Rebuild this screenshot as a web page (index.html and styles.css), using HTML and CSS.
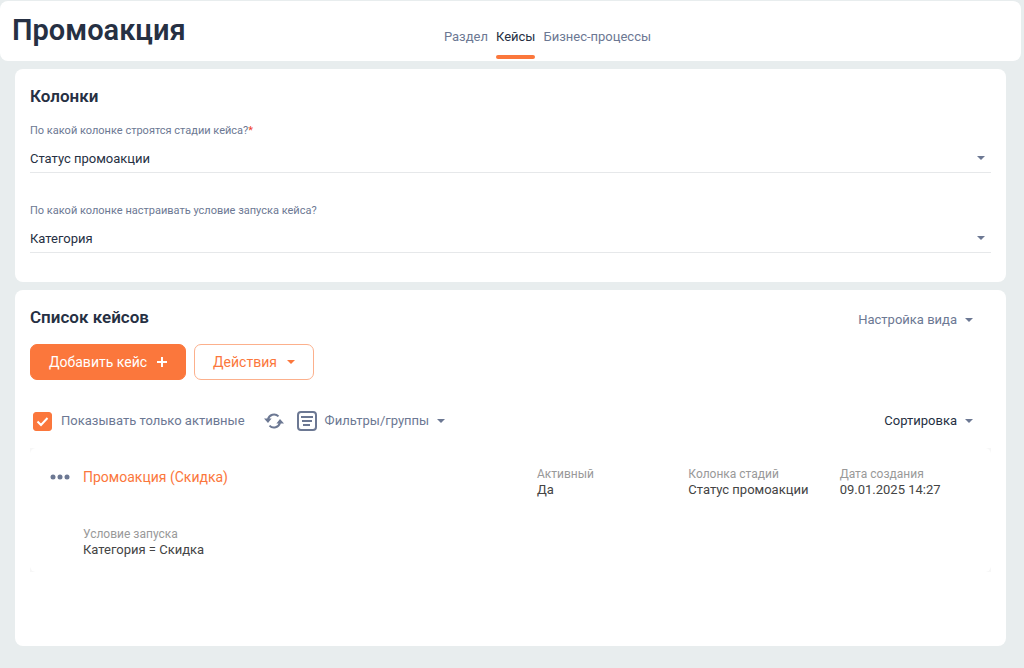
FILE: index.html
```html
<!DOCTYPE html>
<html lang="ru">
<head>
<meta charset="utf-8">
<meta name="viewport" content="width=device-width, initial-scale=1">
<title>Промоакция</title>
<link rel="stylesheet" href="styles.css">
</head>
<body>
<header class="topbar">
  <h1 class="page-title">Промоакция</h1>
  <nav class="tabs">
    <a class="tab" href="#section">Раздел</a>
    <a class="tab tab-active" href="#cases" aria-current="page">Кейсы</a>
    <a class="tab" href="#processes">Бизнес-процессы</a>
  </nav>
</header>
<main class="content">
  <section class="card columns-card">
    <h2 class="card-title">Колонки</h2>
    <div class="field">
      <label class="field-label" for="stage-column">По какой колонке строятся стадии кейса?<span class="required">*</span></label>
      <div class="select-box">
        <select class="select" id="stage-column" required><option>Статус промоакции</option></select>
        <svg class="caret" viewBox="0 0 8 4" aria-hidden="true"><path d="M0 0h8L4 4z"/></svg>
      </div>
    </div>
    <div class="field">
      <label class="field-label" for="start-column">По какой колонке настраивать условие запуска кейса?</label>
      <div class="select-box">
        <select class="select" id="start-column"><option>Категория</option></select>
        <svg class="caret" viewBox="0 0 8 4" aria-hidden="true"><path d="M0 0h8L4 4z"/></svg>
      </div>
    </div>
  </section>

  <section class="card cases-card">
    <div class="cases-head">
      <h2 class="card-title">Список кейсов</h2>
      <button class="link-button" type="button">Настройка вида
        <svg class="caret" viewBox="0 0 8 4" aria-hidden="true"><path d="M0 0h8L4 4z"/></svg>
      </button>
    </div>
    <div class="actions">
      <button class="button button-primary" type="button">Добавить кейс
        <svg class="plus" viewBox="0 0 10 10" aria-hidden="true"><path d="M5 0v10M0 5h10"/></svg>
      </button>
      <button class="button button-outline" type="button">Действия
        <svg class="caret" viewBox="0 0 8 4" aria-hidden="true"><path d="M0 0h8L4 4z"/></svg>
      </button>
    </div>
    <div class="toolbar">
      <label class="check-label"><input class="check" type="checkbox" checked><svg class="check-mark" viewBox="0 0 19 19" aria-hidden="true"><path d="M4.500 9.500l3.500 3.500 6.500-7"/></svg><span>Показывать только активные</span></label>
      <button class="icon-button" type="button" aria-label="Обновить">
        <svg class="refresh" viewBox="0 0 20 16" aria-hidden="true"><path class="arc" d="M14.500 3.400A6.200 6.200 0 0 0 4 6.500M5.500 12.600A6.200 6.200 0 0 0 16 9.500"/><path class="head" d="M0 5.500h7.600L4 10zM12.400 10.500h7.600L16 6z"/></svg>
      </button>
      <button class="link-button filter-button" type="button">
        <svg class="list-icon" viewBox="0 0 20 20" aria-hidden="true"><rect x="1" y="1" width="18" height="18" rx="3"/><path d="M4 6h12M5 10h10M6 14h7"/></svg>
        Фильтры/группы
        <svg class="caret" viewBox="0 0 8 4" aria-hidden="true"><path d="M0 0h8L4 4z"/></svg>
      </button>
      <button class="link-button sort-button" type="button">Сортировка
        <svg class="caret" viewBox="0 0 8 4" aria-hidden="true"><path d="M0 0h8L4 4z"/></svg>
      </button>
    </div>
    <div class="case-list">
      <article class="case">
        <button class="icon-button" type="button" aria-label="Меню кейса">
          <svg class="dots" viewBox="0 0 20 6" aria-hidden="true"><circle cx="3" cy="3" r="2.500"/><circle cx="10" cy="3" r="2.500"/><circle cx="17" cy="3" r="2.500"/></svg>
        </button>
        <a class="case-name" href="#case">Промоакция (Скидка)</a>
        <dl class="fact"><dt>Активный</dt><dd>Да</dd></dl>
        <dl class="fact"><dt>Колонка стадий</dt><dd>Статус промоакции</dd></dl>
        <dl class="fact"><dt>Дата создания</dt><dd>09.01.2025 14:27</dd></dl>
        <dl class="fact condition"><dt>Условие запуска</dt><dd>Категория = Скидка</dd></dl>
      </article>
    </div>
  </section>
</main>
</body>
</html>
```
FILE: styles.css
```css
* {
  box-sizing: border-box;
}

body {
  margin: 0;
  min-height: 100vh;
  background: #e8edee;
  color: #263043;
  font: 13px/16px Roboto, "Open Sans", sans-serif;
}

h1, h2, dl, dd {
  margin: 0;
}

button, select {
  font: inherit;
  color: inherit;
}

button {
  padding: 0;
  border: 0;
  background: none;
  cursor: pointer;
}

.topbar {
  display: grid;
  grid-template-columns: 1fr auto 1fr;
  margin: 1px 3px 8px 0;
  padding: 0 12px;
  min-height: 60px;
  background: #fff;
  border-radius: 8px;
}

.page-title {
  padding-top: 11px;
  font-size: 29px;
  line-height: 36px;
  font-weight: 600;
}

.tabs {
  display: flex;
  gap: 8px;
  padding-left: 74px;
  align-items: flex-end;
}

.tab {
  padding-bottom: 16px;
  color: #6c7893;
  text-decoration: none;
}

.tab-active {
  position: relative;
  color: #263043;
}

.tab-active::after {
  content: "";
  position: absolute;
  left: 0;
  right: 0;
  bottom: 2px;
  height: 4px;
  border-radius: 2px;
  background: #fb773c;
}

.content {
  display: grid;
  gap: 8px;
  padding: 0 18px 22px 15px;
}

.card {
  background: #fff;
  border-radius: 8px;
  padding: 16px 15px;
}

.card-title {
  font-size: 17px;
  line-height: 22px;
  font-weight: 600;
}

.columns-card {
  padding-bottom: 29px;
}

.field {
  padding-top: 16px;
}

.field + .field {
  padding-top: 30px;
}

.field-label {
  display: block;
  font-size: 11px;
  color: #6c7893;
}

.required {
  color: #f0402c;
}

.select-box {
  display: grid;
  align-items: center;
  margin-top: 6px;
  border-bottom: 1px solid #e6e8ea;
}

.select-box > * {
  grid-area: 1 / 1;
}

.select {
  width: 100%;
  height: 27px;
  padding: 0;
  border: 0;
  appearance: none;
  background: none;
}

.caret {
  width: 8px;
  height: 4px;
  fill: #6c7893;
  flex: none;
}

.select-box .caret {
  justify-self: end;
  margin: 0 6px 2px 0;
  pointer-events: none;
}

.cases-card {
  min-height: 356px;
}

.cases-head {
  display: flex;
  justify-content: space-between;
  align-items: flex-start;
}

.link-button {
  display: flex;
  align-items: center;
  gap: 8px;
  color: #6c7893;
}

.cases-head .link-button {
  padding: 6px 18px 0 0;
}

.actions {
  display: flex;
  gap: 8px;
  margin-top: 16px;
}

.button {
  display: flex;
  align-items: center;
  gap: 10px;
  height: 36px;
  padding: 0 18px;
  border: 1px solid #fb773c;
  border-radius: 7px;
  font-size: 14px;
}

.button-primary {
  background: #fb773c;
  color: #fff;
}

.button-outline {
  border-color: #fcb08c;
  color: #fb773c;
}

.button-outline .caret {
  fill: #fb773c;
}

.plus {
  width: 10px;
  height: 10px;
  stroke: #fff;
  stroke-width: 2;
}

.toolbar {
  display: flex;
  align-items: center;
  height: 20px;
  margin-top: 31px;
  padding: 0 18px 0 3px;
}

.check-label {
  display: grid;
  grid-template-columns: 19px auto;
  column-gap: 9px;
  align-items: center;
  color: #6c7893;
  margin-right: 19px;
}

.check {
  grid-area: 1 / 1;
  width: 19px;
  height: 19px;
  margin: 0;
  appearance: none;
  border-radius: 3px;
  border: 1px solid #fb773c;
}

.check:checked {
  background: #fb773c;
}

.check-mark {
  grid-area: 1 / 1;
  width: 19px;
  height: 19px;
  fill: none;
  stroke: #fff;
  stroke-width: 2;
  pointer-events: none;
}

.icon-button {
  display: flex;
}

.refresh {
  width: 20px;
  height: 16px;
}

.refresh .arc {
  fill: none;
  stroke: #6c7893;
  stroke-width: 2;
}

.refresh .head {
  fill: #6c7893;
}

.filter-button {
  margin-left: 13px;
}

.list-icon {
  width: 20px;
  height: 20px;
  fill: none;
  stroke: #6c7893;
  stroke-width: 2;
}

.sort-button {
  margin-left: auto;
  color: #263043;
}

.case-list {
  margin-top: 17px;
  background: #f7f7f7;
}

.case {
  display: grid;
  grid-template-columns: 33px minmax(0, 3fr) repeat(3, minmax(0, 1fr));
  row-gap: 28px;
  padding: 18px 0 14px 20px;
  background: #fff;
  border-radius: 6px;
}

.case .icon-button {
  align-self: start;
  padding-top: 8px;
}

.dots {
  width: 20px;
  height: 6px;
  fill: #6c7893;
}

.case-name {
  font-size: 14px;
  line-height: 22px;
  color: #fb773c;
  text-decoration: none;
}

.fact dt {
  font-size: 12px;
  line-height: 16px;
  color: #999;
}

.fact dd {
  line-height: 16px;
  color: #444;
}

.condition {
  grid-column: 2 / -1;
}
```
